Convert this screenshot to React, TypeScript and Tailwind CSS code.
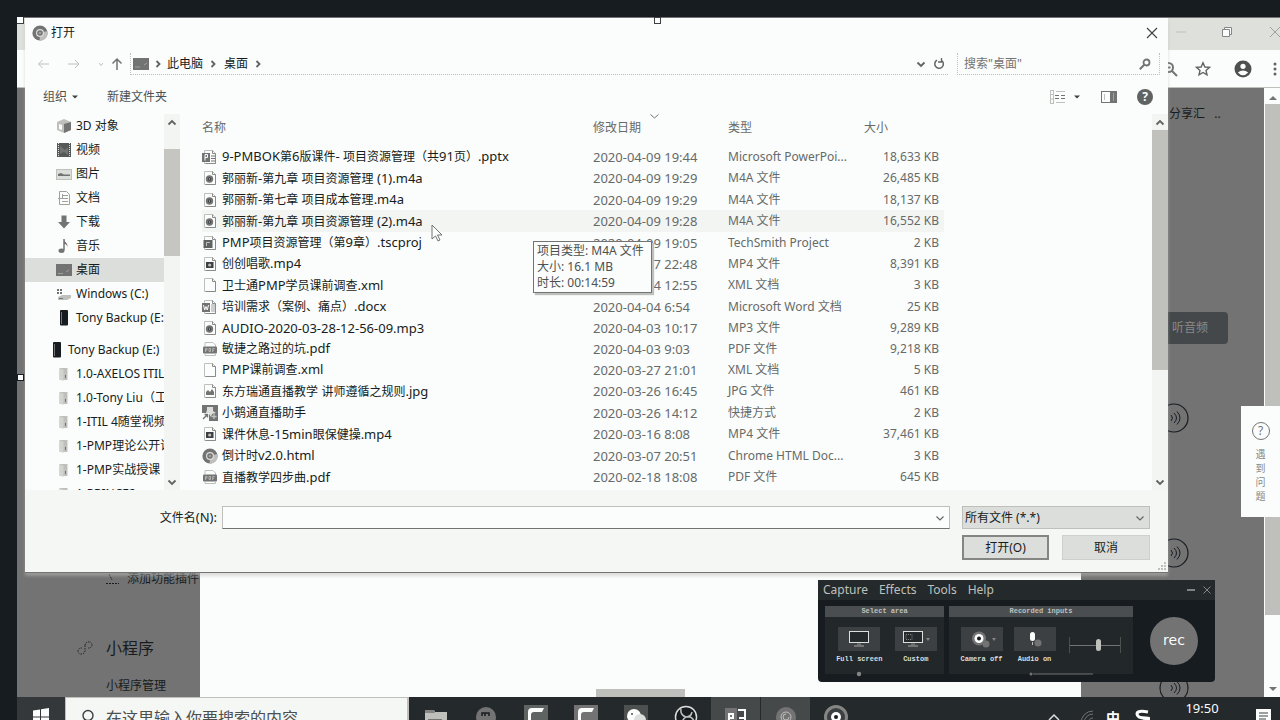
import React from "react";

type Kind = "pptx" | "audio" | "tsc" | "video" | "blank" | "docx" | "pdf" | "image" | "app" | "chrome";

const files: { kind: Kind; name: string; date: string; type: string; size: string; active?: boolean }[] = [
  { kind: "pptx", name: "9-PMBOK第6版课件- 项目资源管理（共91页）.pptx", date: "2020-04-09 19:44", type: "Microsoft PowerPoi...", size: "18,633 KB" },
  { kind: "audio", name: "郭丽新-第九章 项目资源管理 (1).m4a", date: "2020-04-09 19:29", type: "M4A 文件", size: "26,485 KB" },
  { kind: "audio", name: "郭丽新-第七章 项目成本管理.m4a", date: "2020-04-09 19:29", type: "M4A 文件", size: "18,137 KB" },
  { kind: "audio", name: "郭丽新-第九章 项目资源管理 (2).m4a", date: "2020-04-09 19:28", type: "M4A 文件", size: "16,552 KB", active: true },
  { kind: "tsc", name: "PMP项目资源管理（第9章）.tscproj", date: "2020-04-09 19:05", type: "TechSmith Project", size: "2 KB" },
  { kind: "video", name: "创创唱歌.mp4", date: "2020-04-07 22:48", type: "MP4 文件", size: "8,391 KB" },
  { kind: "blank", name: "卫士通PMP学员课前调查.xml", date: "2020-04-04 12:55", type: "XML 文档", size: "3 KB" },
  { kind: "docx", name: "培训需求（案例、痛点）.docx", date: "2020-04-04 6:54", type: "Microsoft Word 文档", size: "25 KB" },
  { kind: "audio", name: "AUDIO-2020-03-28-12-56-09.mp3", date: "2020-04-03 10:17", type: "MP3 文件", size: "9,289 KB" },
  { kind: "pdf", name: "敏捷之路过的坑.pdf", date: "2020-04-03 9:03", type: "PDF 文件", size: "9,218 KB" },
  { kind: "blank", name: "PMP课前调查.xml", date: "2020-03-27 21:01", type: "XML 文档", size: "5 KB" },
  { kind: "image", name: "东方瑞通直播教学 讲师遵循之规则.jpg", date: "2020-03-26 16:45", type: "JPG 文件", size: "461 KB" },
  { kind: "app", name: "小鹅通直播助手", date: "2020-03-26 14:12", type: "快捷方式", size: "2 KB" },
  { kind: "video", name: "课件休息-15min眼保健操.mp4", date: "2020-03-16 8:08", type: "MP4 文件", size: "37,461 KB" },
  { kind: "chrome", name: "倒计时v2.0.html", date: "2020-03-07 20:51", type: "Chrome HTML Doc...", size: "3 KB" },
  { kind: "pdf", name: "直播教学四步曲.pdf", date: "2020-02-18 18:08", type: "PDF 文件", size: "645 KB" },
];

type Place = "cube" | "film" | "picture" | "doc" | "down" | "note" | "desktop" | "drive" | "phone" | "folder";

const places: { icon: Place; name: string; selected?: boolean; root?: boolean }[] = [
  { icon: "cube", name: "3D 对象" },
  { icon: "film", name: "视频" },
  { icon: "picture", name: "图片" },
  { icon: "doc", name: "文档" },
  { icon: "down", name: "下载" },
  { icon: "note", name: "音乐" },
  { icon: "desktop", name: "桌面", selected: true },
  { icon: "drive", name: "Windows (C:)" },
  { icon: "phone", name: "Tony Backup (E:)" },
  { icon: "phone", name: "Tony Backup (E:)", root: true },
  { icon: "folder", name: "1.0-AXELOS ITIL" },
  { icon: "folder", name: "1.0-Tony Liu（工作）" },
  { icon: "folder", name: "1-ITIL 4随堂视频" },
  { icon: "folder", name: "1-PMP理论公开课" },
  { icon: "folder", name: "1-PMP实战授课" },
  { icon: "folder", name: "1-PRINCE2" },
];

/** Latin runs inherit the surrounding size; Chinese runs are set one step smaller. */
function Mixed({ children }: { children: string }) {
  return (
    <>
      {children.split(/([\u3000-\u9fff\uff00-\uffef]+)/).map((run, i) =>
        i % 2 ? <span key={i} className="text-[12px]">{run}</span> : run,
      )}
    </>
  );
}

function ChromeMark({ className }: { className: string }) {
  return (
    <svg viewBox="0 0 16 16" className={className} aria-hidden="true">
      <circle cx="8" cy="8" r="7.6" fill="#737373" />
      <path d="M8 8 15.4 6A7.6 7.6 0 0 1 7.6 15.6Z" fill="#bfc0bb" />
      <circle cx="8" cy="8" r="4" fill="#dcdedb" />
      <circle cx="8" cy="8" r="2.8" fill="#737373" />
      <circle cx="8" cy="8" r="1.3" fill="#a0a09d" />
    </svg>
  );
}

function FileIcon({ kind }: { kind: Kind }) {
  if (kind === "chrome") return <ChromeMark className="size-4 shrink-0" />;
  if (kind === "app")
    return (
      <svg viewBox="0 0 16 16" className="size-4 shrink-0" aria-hidden="true">
        <rect width="16" height="16" fill="#737373" />
        <path d="M5 2h6v4l3 2-4 1-1 3-2-3-3-1 1-3z" fill="#dcdedb" />
        <path d="M0 8h7v8H0z" fill="#fbfdfc" />
        <path d="M1 14l4-4M2.500 9.500H5.500V12.500" stroke="#737373" strokeWidth="1.400" fill="none" />
        <path d="M12 9v5M9.500 11.500h5" stroke="#bfc0bb" strokeWidth="1.300" />
      </svg>
    );
  if (kind === "pdf")
    return (
      <svg viewBox="0 0 16 16" className="size-4 shrink-0" aria-hidden="true">
        <path d="M3 5V1.500h8L13.500 4v2M3 13v1.500h10.500V13" fill="none" stroke="#bfc0bb" />
        <rect x="1" y="5.500" width="14" height="7" rx="1" fill="#737373" />
        <path d="M3.500 11V7.500h1.500v1.700H3.500M7 7.500v3h1.500v-3H7M10.700 11V7.500h2M10.700 9.200h1.500" fill="none" stroke="#bfc0bb" strokeWidth="0.800" />
      </svg>
    );
  return (
    <svg viewBox="0 0 16 16" className="size-4 shrink-0" aria-hidden="true">
      <path d="M2.500 1.500h8l3 3v10h-11z" fill="#fbfdfc" stroke="#bfc0bb" />
      <path d="M10.500 1.500v3h3v10h-10" fill="none" stroke="#8a8a88" />
      {kind === "audio" && (
        <>
          <circle cx="7.500" cy="9" r="3.700" fill="#737373" />
          <circle cx="7.500" cy="9" r="1.700" fill="#3c4042" />
          <circle cx="7.500" cy="9" r="0.700" fill="#bfc0bb" />
        </>
      )}
      {kind === "video" && (
        <>
          <rect x="4" y="6" width="7.500" height="6" fill="#3c4042" />
          <circle cx="7.700" cy="9" r="1.600" fill="#bfc0bb" />
        </>
      )}
      {kind === "tsc" && (
        <>
          <rect x="1.500" y="5" width="9" height="8" fill="#5f6362" />
          <path d="M8 7.500H4.500V11" stroke="#bfc0bb" fill="none" />
        </>
      )}
      {kind === "image" && <path d="M4 12V9l2-2 2 2 2-3 2 3v3z" fill="#737373" />}
      {kind === "pptx" && (
        <>
          <path d="M9 7h4M9 9.500h4M9 12h4" stroke="#737373" />
          <rect x="0" y="4" width="8" height="9" fill="#737373" />
          <path d="M3 11.500v-6h2.500v3H3" stroke="#fbfdfc" fill="none" />
        </>
      )}
      {kind === "docx" && (
        <>
          <path d="M9 6h4M9 8h4M9 10h4M9 12h4" stroke="#a0a09d" />
          <rect x="0" y="4" width="8" height="9" fill="#737373" />
          <path d="M1.500 6 2.700 11 4 7.500 5.300 11 6.500 6" stroke="#fbfdfc" fill="none" />
        </>
      )}
    </svg>
  );
}

function PlaceIcon({ icon }: { icon: Place }) {
  return (
    <svg viewBox="0 0 16 16" className="size-4 shrink-0" aria-hidden="true">
      {icon === "cube" && (
        <>
          <path d="M1 4 8 1l7 3v8l-7 3-7-3z" fill="#bfc0bb" />
          <path d="M8 6l7-2v8l-7 3z" fill="#737373" />
          <path d="M3 6l3 1v5l-3-1z" fill="#fbfdfc" />
        </>
      )}
      {icon === "film" && (
        <>
          <rect x="1" y="1" width="14" height="14" fill="#555958" />
          <path d="M2.500 1v14M13.500 1v14" stroke="#dcdedb" strokeDasharray="1 1" />
          <path d="M4 4l5 4 3-3v8l-4-3-4 2z" fill="#737373" />
        </>
      )}
      {icon === "picture" && (
        <>
          <rect x="0.500" y="3.500" width="15" height="10" fill="#dcdedb" stroke="#bfc0bb" />
          <path d="M2 10V8l3-1 3 1.500 6 0V10z" fill="#737373" />
        </>
      )}
      {icon === "doc" && (
        <>
          <path d="M3.500 1.500h7l3 3v10h-10z" fill="#fbfdfc" stroke="#a0a09d" />
          <path d="M2 8.500h10M6 11.500h6M6 5.500h6M6.500 4v5" stroke="#a0a09d" />
        </>
      )}
      {icon === "down" && <path d="M5.500 1.500h5V8H14l-6 6.500L2 8h3.500z" fill="#737373" />}
      {icon === "note" && (
        <>
          <path d="M8 1v11" stroke="#737373" strokeWidth="1.500" />
          <path d="M8 1c0 3 4 3.500 3.500 8C11 6.500 9 6 8 6z" fill="#737373" />
          <ellipse cx="5.500" cy="12.700" rx="3" ry="2.200" fill="#737373" />
        </>
      )}
      {icon === "desktop" && (
        <>
          <rect x="0" y="2" width="16" height="12" fill="#737373" />
          <path d="M2 11.500h5M10 10l3-2" stroke="#a0a09d" />
        </>
      )}
      {icon === "drive" && (
        <>
          <path d="M1 3h2v2H1zM4 3h2v2H4zM1 6h2v2H1zM4 6h2v2H4z" fill="#737373" />
          <path d="M2 11l4-2h9v3l-4 2H2z" fill="#bfc0bb" />
          <path d="M3 12.500h4" stroke="#737373" />
        </>
      )}
      {icon === "phone" && (
        <>
          <rect x="4" y="0" width="8" height="15.500" rx="1" fill="#171c20" />
          <path d="M5.500 2v12" stroke="#737373" />
        </>
      )}
      {icon === "folder" && (
        <>
          <path d="M3.500 2h8v12h-8z" fill="#bfc0bb" />
          <path d="M3.500 2l4 2v11l-4-1.500z" fill="#d2d4d0" />
          <path d="M9 9h1v3H9z" fill="#737373" />
        </>
      )}
    </svg>
  );
}

type Dir = "up" | "down" | "right";
const chevrons: Record<Dir, string> = { up: "M2.500 7.500 6 4l3.500 3.500", down: "M2.500 4.500 6 8l3.500-3.500", right: "M4.500 3l3 3-3 3" };

function Chevron({ dir, bold }: { dir: Dir; bold?: boolean }) {
  return (
    <svg viewBox="0 0 12 12" className="size-3 shrink-0" aria-hidden="true">
      <path d={chevrons[dir]} fill="none" stroke="#5f6362" strokeWidth={bold ? 1.8 : 1.1} />
    </svg>
  );
}

function Caret() {
  return (
    <svg viewBox="0 0 6 4" className="h-1 w-1.5 shrink-0" aria-hidden="true">
      <path d="M0 .5h6L3 3.500z" fill="#3c4042" />
    </svg>
  );
}

function NavBar() {
  return (
    <div className="flex h-[32px] items-center pt-0.5 pr-2 pl-[10px]">
      <button aria-label="后退" className="flex w-[30px] justify-start">
        <svg viewBox="0 0 14 12" className="ml-0.5 h-3 w-3.5"><path d="M12 6H1.500M5.500 2 1.500 6 5.500 10" fill="none" stroke="#bfc0bb" /></svg>
      </button>
      <button aria-label="前进" className="flex w-[30px] justify-start">
        <svg viewBox="0 0 14 12" className="ml-0.5 h-3 w-3.5"><path d="M1 6h10.500M8 2 12 6 8 10" fill="none" stroke="#bfc0bb" /></svg>
      </button>
      <button aria-label="最近位置" className="flex w-3 items-center justify-center">
        <svg viewBox="0 0 4 3" className="h-[3px] w-1"><path d="M0 0 2 2.500 4 0" fill="none" stroke="#bfc0bb" /></svg>
      </button>
      <button aria-label="上移" className="flex w-[23px] justify-center pr-1">
        <svg viewBox="0 0 12 14" className="h-3.5 w-3"><path d="M6 13V2M1.500 6.500 6 2l4.500 4.500" fill="none" stroke="#737373" strokeWidth="1.500" /></svg>
      </button>
      <div className="flex h-[22px] flex-1 items-center border-b border-l border-dotted border-[#bfc0bb] pl-0.5 text-[12px] text-[#171c20]">
        <svg viewBox="0 0 16 12" className="h-3 w-4"><path d="M0 0h16v12H0z" fill="#737373" /><path d="M2 9h5M11 7l3-2" stroke="#a0a09d" /></svg>
        <span className="ml-[3px] flex"><Chevron dir="right" bold /></span>
        <a href="#pc" className="ml-[3px] shrink-0 whitespace-nowrap">此电脑</a>
        <span className="mr-2 ml-1 flex w-[9px]"><Chevron dir="right" bold /></span>
        <a href="#desktop" className="shrink-0 whitespace-nowrap">桌面</a>
        <span className="ml-1 flex"><Chevron dir="right" bold /></span>
        <button aria-label="历史" className="ml-auto flex w-[18px] justify-center"><Chevron dir="down" bold /></button>
        <button aria-label="刷新" className="flex w-[18px] justify-center">
          <svg viewBox="0 0 12 12" className="size-3"><path d="M9 2.800A4.300 4.300 0 1 1 4 2.200" fill="none" stroke="#5f6362" strokeWidth="1.500" /><path d="M8.500 0v4H5" fill="none" stroke="#5f6362" strokeWidth="1.300" /></svg>
        </button>
      </div>
      <div className="ml-[9px] flex h-[22px] w-[203px] items-center border-x border-b border-dotted border-[#bfc0bb] pr-2 pl-1.5">
        <input aria-label="搜索" placeholder={'搜索"桌面"'} className="min-w-0 flex-1 bg-transparent text-[12px] outline-none placeholder:text-[#737373]" />
        <svg viewBox="0 0 12 12" className="size-3"><circle cx="7.500" cy="4.500" r="3" fill="none" stroke="#737373" strokeWidth="1.800" /><path d="M5.300 6.700.8 11.200" stroke="#737373" strokeWidth="2" /></svg>
      </div>
    </div>
  );
}

function Toolbar() {
  return (
    <div className="flex h-[35px] items-center pr-[15px] pl-[18px] text-[12px] text-[#4c504f]">
      <button className="flex items-center gap-[5px]">组织<Caret /></button>
      <button className="ml-[29px]">新建文件夹</button>
      <button aria-label="视图" className="ml-auto flex items-center gap-2">
        <svg viewBox="0 0 16 14" className="h-3.5 w-4"><path d="M0.500 0v14M3.500 0v14M0 .5h4M0 4.500h4M0 9h4M0 13.500h4M6 1.500h9M6 12.500h9" stroke="#bfc0bb" /><path d="M5 5.500h4M11 5.500h4M5 8.500h4M11 8.500h4" stroke="#737373" /></svg>
        <Caret />
      </button>
      <button aria-label="预览窗格" className="ml-[21px]">
        <svg viewBox="0 0 16 12" className="h-3 w-4"><rect x="0.500" y="0.500" width="15" height="11" fill="#fbfdfc" stroke="#737373" /><path d="M9 0h7v12H9z" fill="#737373" /><path d="M3.500 3v6" stroke="#bfc0bb" /><path d="M12.500 2v8" stroke="#a0a09d" /></svg>
      </button>
      <button aria-label="帮助" className="ml-5 flex size-4 items-center justify-center rounded-full bg-[#5f6362] text-[12px] font-bold text-[#fbfdfc]">?</button>
    </div>
  );
}

function FileTable() {
  return (
    <table className="h-[374px] w-[742px] table-fixed border-collapse text-left text-[13px]/[16px] whitespace-nowrap text-[#666a69]">
      <colgroup>
        <col className="w-[383px]" />
        <col className="w-[135px]" />
        <col className="w-[136px]" />
        <col className="w-[88px]" />
      </colgroup>
      <thead>
        <tr className="h-[32px] text-[12px]">
          <th className="pt-0.5 pb-1.5 font-normal">名称</th>
          <th className="relative pt-0.5 pb-1.5 pl-2 font-normal">
            修改日期
            <svg viewBox="0 0 9 5" className="absolute top-0 left-[65px] h-[5px] w-[9px]" aria-hidden="true"><path d="M.5.5l4 3.500 4-3.500" fill="none" stroke="#737373" /></svg>
          </th>
          <th className="pt-0.5 pb-1.5 pl-2 font-normal">类型</th>
          <th className="pt-0.5 pb-1.5 pl-2 font-normal">大小</th>
        </tr>
      </thead>
      <tbody>
        {files.map((f) => (
          <tr key={f.name} className={f.active ? "bg-[#f3f5f3]" : ""}>
            <td className="p-0">
              <div className="flex items-center gap-1 text-[#171c20]">
                <FileIcon kind={f.kind} />
                <span><Mixed>{f.name}</Mixed></span>
              </div>
            </td>
            <td className="p-0 pl-2">{f.date}</td>
            <td className="p-0 pl-2 text-[12px]">{f.type}</td>
            <td className="p-0 pr-[5px] text-right text-[12px]">{f.size}</td>
          </tr>
        ))}
      </tbody>
    </table>
  );
}

function OpenDialog() {
  return (
    <section role="dialog" aria-label="打开" className="absolute top-[18px] right-[112px] left-[25px] z-10 bg-[#fbfdfc] shadow-[0_1px_0_#737373,0_4px_3px_#bfc0bb80]">
      <header className="flex h-[29px] items-center pr-[10px] pl-[7px]">
        <ChromeMark className="size-4" />
        <h1 className="ml-[3px] text-[12px] text-[#171c20]">打开</h1>
        <button aria-label="关闭" className="ml-auto">
          <svg viewBox="0 0 12 12" className="size-3"><path d="M1 1l10 10M11 1 1 11" stroke="#3c4042" strokeWidth="1.100" /></svg>
        </button>
      </header>
      <NavBar />
      <Toolbar />
      <div className="flex h-[376px] overflow-hidden">
        <ul className="w-[139px] overflow-hidden text-[12px]/[24px] text-[#171c20]">
          {places.map((p, i) => (
            <li key={i} className={p.root ? "mt-2" : ""}>
              <button
                className={
                  "flex h-6 w-full items-center overflow-hidden text-left whitespace-nowrap " +
                  (p.selected ? "bg-[#dcdedb] " : "") +
                  (p.root ? "gap-[3px] pl-[24px]" : "gap-1 pl-[31px]")
                }
              >
                <PlaceIcon icon={p.icon} />
                <span>{p.name}</span>
              </button>
            </li>
          ))}
        </ul>
        <div className="flex w-4 flex-col items-center bg-[#f3f5f3] pt-[3px] pb-0.5">
          <Chevron dir="up" bold />
          <div className="mt-5 h-[107px] w-full bg-[#c5c6c2]" />
          <span className="mt-auto flex"><Chevron dir="down" bold /></span>
        </div>
        <div className="min-w-0 flex-1 pl-[22px]">
          <FileTable />
        </div>
        <div className="flex w-4 flex-col items-center bg-[#f3f5f3] pt-[3px] pb-0.5">
          <Chevron dir="up" bold />
          <div className="mt-px h-60 w-full bg-[#c0c1bc]" />
          <span className="mt-auto flex"><Chevron dir="down" bold /></span>
        </div>
      </div>
      <form className="flex h-[82px] flex-col gap-[6px] bg-[#f5f7f5] pt-4 pr-[18px] text-[12px] text-[#171c20]" onSubmit={(e) => e.preventDefault()}>
        <div className="flex h-[23px] items-center">
          <label htmlFor="filename" className="w-[192px] text-right text-[13px]"><Mixed>文件名(N):</Mixed></label>
          <div className="ml-[5px] flex h-full flex-1 items-center border border-[#bfc0bb] border-b-[#737373] bg-[#fbfdfc] pr-[3px]">
            <input id="filename" className="min-w-0 flex-1 bg-transparent px-1 outline-none" />
            <Chevron dir="down" />
          </div>
          <div className="relative ml-[12px] flex h-full w-[188px] items-center border border-[#bfc0bb] bg-[#dcdedb]">
            <select aria-label="文件类型" className="h-full w-full appearance-none bg-transparent pl-0.5 text-[12px] outline-none">
              <option>所有文件 (*.*)</option>
            </select>
            <span className="pointer-events-none absolute right-[3px] flex"><Chevron dir="down" /></span>
          </div>
        </div>
        <div className="flex justify-end gap-[13px]">
          <button className="h-[25px] w-[87px] border-2 border-[#858684] bg-[#dcdedb] text-[12px]">打开(O)</button>
          <button className="h-[25px] w-[88px] border border-[#cfd0cd] bg-[#dcdedb]">取消</button>
        </div>
      </form>
      <svg viewBox="0 0 8 8" className="absolute right-0.5 bottom-0.5 size-2" aria-hidden="true"><path d="M6 0h2v2H6zM3 3h2v2H3zM6 3h2v2H6zM0 6h2v2H0zM3 6h2v2H3zM6 6h2v2H6z" fill="#bfc0bb" /></svg>
      <div role="tooltip" className="absolute top-[223px] left-[508px] w-[119px] border border-[#737373] bg-[#fbfdfc] px-[3px] pt-px pb-px text-[12px]/[16px] whitespace-nowrap text-[#4c504f] shadow-[2px_2px_1px_#bfc0bb]">
        <p>项目类型: M4A 文件</p>
        <p>大小: 16.1 MB</p>
        <p>时长: 00:14:59</p>
      </div>
      <svg viewBox="0 0 12 18" className="absolute top-[206px] left-[406px] h-[18px] w-3" aria-hidden="true">
        <path d="M1 1v14l3.500-3 2.500 5 2-1-2.500-5H11z" fill="#fbfdfc" stroke="#737373" />
      </svg>
    </section>
  );
}

function AudioBadge() {
  return (
    <svg viewBox="0 0 30 30" className="size-[30px] shrink-0" aria-hidden="true">
      <circle cx="15" cy="15" r="14" fill="none" stroke="#171c20" strokeWidth="1.200" />
      <path d="M12 12q3 3 0 6M15 10q5 5 0 10M18 8.500q6 6.500 0 13" fill="none" stroke="#171c20" />
    </svg>
  );
}

function Browser() {
  return (
    <div className="flex min-h-0 flex-1 flex-col border-t border-[#737373] bg-[#fbfdfc]">
      <div className="flex h-[32px] shrink-0 items-center justify-end gap-[36px] overflow-hidden bg-[#dee0dc] pb-1">
        <svg viewBox="0 0 10 10" className="size-2.5"><path d="M0 5h10" stroke="#bfc0bb" /></svg>
        <svg viewBox="0 0 10 10" className="mr-0.5 size-2.5"><path d="M.5 2.500h7v7h-7zM2.500 2V.5h7v7H8" fill="#fbfdfc" stroke="#858684" /></svg>
        <svg viewBox="0 0 10 10" className="size-2.5"><path d="M0 0l10 10M10 0 0 10" stroke="#a0a09d" /></svg>
      </div>
      <div className="flex h-[38px] shrink-0 items-center justify-end border-b border-[#bfc0bb]">
        <svg viewBox="0 0 16 16" className="size-4"><circle cx="6.500" cy="6.500" r="4.500" fill="none" stroke="#737373" strokeWidth="2" /><path d="M10 10l5 5M4.500 6.500h4" stroke="#737373" strokeWidth="2" /></svg>
        <svg viewBox="0 0 16 16" className="ml-[17px] size-4"><path d="M8 1.800l1.900 4.200 4.500.4-3.400 3 1 4.500L8 11.500l-4 2.400 1-4.500-3.400-3 4.500-.4z" fill="none" stroke="#5f6362" strokeWidth="1.400" /></svg>
        <svg viewBox="0 0 18 18" className="ml-[23px] size-[18px]"><circle cx="9" cy="9" r="8.500" fill="#4c504f" /><circle cx="9" cy="6.300" r="2.600" fill="#fbfdfc" /><path d="M3.800 12.500q5.200-4 10.400 0Q9 18 3.800 12.500" fill="#fbfdfc" /></svg>
        <svg viewBox="0 0 4 14" className="mr-[3px] ml-[21px] h-3.5 w-1"><circle cx="2" cy="2" r="1.500" fill="#5f6362" /><circle cx="2" cy="7" r="1.500" fill="#5f6362" /><circle cx="2" cy="12" r="1.500" fill="#5f6362" /></svg>
      </div>
      <div className="flex min-h-0 flex-1 overflow-hidden">
        <nav className="flex w-[183px] flex-col justify-end overflow-hidden bg-[#737373] text-[12px]/[16px] whitespace-nowrap text-[#171c20]">
          <a href="#plugins" className="flex items-center gap-2 pl-[89px]">
            <svg viewBox="0 0 13 12" className="h-3 w-[13px] shrink-0"><path d="M3 1l3 6M0 10.500h13" stroke="#171c20" strokeDasharray="2 1" /></svg>
            添加功能插件
          </a>
          <a href="#mini" className="mt-[51px] flex items-center gap-[13px] pl-[60px] text-[16px]/[20px]">
            <svg viewBox="0 0 16 16" className="size-4 shrink-0"><path d="M8 5.500C8 1 15 .5 15 5q0 3-4 3M8 10.500C8 15 1 15.500 1 11q0-3 4-3M8 5.500v5" fill="none" stroke="#24292c" strokeDasharray="1.500 1" /></svg>
            小程序
          </a>
          <a href="#manage" className="mt-5 mb-[3px] pl-[89px]">小程序管理</a>
        </nav>
        <main className="flex flex-1 flex-col items-center justify-end bg-[#fbfdfc]">
          <div className="h-2 w-[89px] bg-[#bfc0bb]" />
        </main>
        <aside className="flex w-[183px] flex-col items-start bg-[#737373] pl-[78px] text-[12px] text-[#171c20]">
          <p className="mt-[18px] shrink-0 pl-[10px] text-[12px]/[16px] whitespace-nowrap">分享汇 &nbsp; ..</p>
          <button className="mt-[190px] h-[32px] w-[69px] shrink-0 rounded-sm bg-[#44484a] pr-5 text-right text-[#8a8a88]">听音频</button>
          <div className="mt-[59px] flex flex-col gap-[105px]">
            <AudioBadge />
            <AudioBadge />
            <AudioBadge />
          </div>
        </aside>
        <div className="flex w-4 flex-col items-center border-l border-[#fbfdfc] bg-[#fbfdfc] py-1.5">
          <svg viewBox="0 0 8 4" className="mt-0.5 h-1 w-2 shrink-0"><path d="M0 4 4 0l4 4z" fill="#737373" /></svg>
          <div className="mt-1 h-[511px] w-full bg-[#bfc0bb]" />
          <svg viewBox="0 0 8 4" className="mt-auto h-1 w-2 shrink-0"><path d="M0 0h8L4 4z" fill="#737373" /></svg>
        </div>
      </div>
    </div>
  );
}

function HelpTab() {
  return (
    <aside className="absolute top-[406px] right-0 flex w-[39px] flex-col items-center bg-[#fbfdfc] pt-4 pb-[14px] text-[#8a8a88]">
      <span className="flex size-[18px] items-center justify-center rounded-full border border-[#737373] text-[12px] text-[#737373]">?</span>
      <span className="mt-[7px] w-[10px] text-center text-[10px]/[14px] break-all">遇到问题</span>
    </aside>
  );
}

function Device({ label, icon, drop }: { label: string; icon: "screen" | "custom" | "camera" | "mic"; drop?: boolean }) {
  return (
    <button className="flex flex-1 flex-col items-center gap-1">
      <span className="flex h-6 w-[42px] items-center justify-center bg-[#3c4042]">
        <svg viewBox="0 0 22 18" className="h-[18px] w-[22px]" aria-hidden="true">
          {(icon === "screen" || icon === "custom") && (
            <>
              <rect x="1.500" y="1.500" width="19" height="11" fill="#24292c" stroke="#dcdedb" />
              <path d="M9 13.500h4v1.500h3v2H6v-2h3z" fill="#737373" />
              {icon === "custom" && <path d="M4 4.500h6v5H4z" fill="none" stroke="#858684" strokeDasharray="1 1" />}
            </>
          )}
          {icon === "camera" && (
            <>
              <circle cx="11" cy="8.500" r="7" fill="#737373" />
              <circle cx="11" cy="8.500" r="4.500" fill="#fbfdfc" />
              <circle cx="11" cy="8.500" r="2" fill="#171c20" />
              <circle cx="18" cy="14" r="3.500" fill="#737373" />
            </>
          )}
          {icon === "mic" && (
            <>
              <rect x="6" y="2" width="5" height="9" rx="2.500" fill="#fbfdfc" />
              <path d="M8.500 12v3" stroke="#bfc0bb" />
              <circle cx="14" cy="13" r="3.500" fill="#737373" />
            </>
          )}
        </svg>
        {drop && <svg viewBox="0 0 4 3" className="ml-0.5 h-[3px] w-1"><path d="M0 0h4L2 3z" fill="#858684" /></svg>}
      </span>
      <span className="font-['Liberation_Mono',monospace] text-[7px]/[8px] font-bold whitespace-nowrap text-[#dcdedb]">{label}</span>
    </button>
  );
}

function Group({ title, className, children }: { title: string; className: string; children: React.ReactNode }) {
  return (
    <div className={"flex h-[68px] flex-col bg-[#22272a] " + className}>
      <h2 className="h-[11px] bg-[#4a4e50] text-center font-['Liberation_Mono',monospace] text-[7px]/[11px] font-bold text-[#bfc0bb]">{title}</h2>
      <div className="mt-2.5 flex items-start pl-1.5">{children}</div>
    </div>
  );
}

function Recorder() {
  return (
    <section aria-label="Recorder" className="absolute top-[580px] right-[65px] z-20 w-[397px] rounded-sm bg-[#171c20] pb-2">
      <div className="flex h-5 items-center gap-[11px] bg-[#24292c] pr-1 pl-[5px] text-[12px] text-[#bfc0bb]">
        <button>Capture</button>
        <button>Effects</button>
        <button>Tools</button>
        <button>Help</button>
        <div className="ml-auto flex gap-2">
          <button aria-label="Minimize"><svg viewBox="0 0 8 8" className="size-2"><path d="M0 4h8" stroke="#dcdedb" /></svg></button>
          <button aria-label="Close"><svg viewBox="0 0 8 8" className="size-2"><path d="M.5.5l7 7M7.500.5l-7 7" stroke="#858684" /></svg></button>
        </div>
      </div>
      <div className="flex pt-1.5 pl-[7px]">
        <Group title="Select area" className="w-[119px]">
          <Device label="Full screen" icon="screen" />
          <Device label="Custom" icon="custom" drop />
        </Group>
        <Group title="Recorded inputs" className="ml-[5px] w-[184px]">
          <Device label="Camera off" icon="camera" drop />
          <Device label="Audio on" icon="mic" />
          <label className="mt-2.5 mr-3 ml-2 flex h-4 w-[52px] items-center border-x border-[#4c504f]">
            <input type="range" aria-label="Volume" defaultValue={58} className="h-px w-full appearance-none bg-[#737373] [&::-webkit-slider-thumb]:h-3 [&::-webkit-slider-thumb]:w-[5px] [&::-webkit-slider-thumb]:appearance-none [&::-webkit-slider-thumb]:rounded-sm [&::-webkit-slider-thumb]:bg-[#bfc0bb]" />
          </label>
        </Group>
        <button className="mt-[11px] ml-[17px] size-12 rounded-full bg-[#737373] pb-0.5 font-['DejaVu_Sans',sans-serif] text-[14px] text-[#fbfdfc]">rec</button>
      </div>
      <svg viewBox="0 0 300 6" className="absolute bottom-[5px] left-[38px] h-1.5 w-[300px]" aria-hidden="true">
        <circle cx="3" cy="3" r="2.200" fill="#858684" />
        <circle cx="175" cy="3" r="1.500" fill="#737373" />
        <path d="M177 3h60" stroke="#737373" />
      </svg>
    </section>
  );
}

type Task = "explorer" | "duck" | "camtasia" | "camtasia2" | "wechat" | "obs" | "ppt" | "chrome" | "recorder";
const tasks: Task[] = ["explorer", "duck", "camtasia", "camtasia2", "wechat", "obs", "ppt", "chrome", "recorder"];

function TaskIcon({ task }: { task: Task }) {
  return (
    <svg viewBox="0 0 24 24" className="size-6" aria-hidden="true">
      {task === "explorer" && <><path d="M1 5h9l1 2h12v15H1z" fill="#bfc0bb" /><path d="M1 5h9l1 3H1z" fill="#858684" /><path d="M4 14h14v8H4z" fill="#737373" /></>}
      {task === "duck" && <><circle cx="12" cy="12" r="10" fill="#737373" /><path d="M8 11V8h7v3M11 8v3" fill="none" stroke="#171c20" strokeWidth="1.500" /></>}
      {(task === "camtasia" || task === "camtasia2") && <><rect width="24" height="24" fill={task === "camtasia" ? "#5f6362" : "#737373"} /><path d="M20 3H8q-4 0-4 4v14h3V10q0-3 3-3h8z" fill="#fbfdfc" /></>}
      {task === "wechat" && <><rect width="24" height="24" fill="#4c504f" /><circle cx="10" cy="11" r="7" fill="#fbfdfc" /><circle cx="16" cy="15" r="6" fill="#dcdedb" /><circle cx="8" cy="9" r="1" fill="#4c504f" /></>}
      {task === "obs" && <><circle cx="12" cy="12" r="10.500" fill="#171c20" stroke="#dcdedb" strokeWidth="1.500" /><path d="M7 4q-1 6 5 8 5 0 6-5M12 12q-5 3-3 8M12 12q6-1 8 4" fill="none" stroke="#bfc0bb" strokeWidth="1.500" /></>}
      {task === "ppt" && <><rect x="1" y="3" width="12" height="19" fill="#737373" /><path d="M5 18V9h4v4H5" fill="none" stroke="#fbfdfc" strokeWidth="2" /><path d="M14 5h7v17h-7M15 13h5" fill="none" stroke="#fbfdfc" strokeWidth="2" /></>}
      {task === "chrome" && <><circle cx="12" cy="12" r="10" fill="#737373" /><circle cx="12" cy="12" r="5" fill="none" stroke="#bfc0bb" /><path d="M12 9a3 3 0 1 0 3 3" fill="none" stroke="#bfc0bb" /></>}
      {task === "recorder" && <><circle cx="12" cy="12" r="10.500" fill="#3c4042" stroke="#858684" strokeWidth="3" /><circle cx="12" cy="12" r="5" fill="#fbfdfc" /><circle cx="12" cy="12" r="2" fill="#171c20" /></>}
    </svg>
  );
}

function Taskbar() {
  return (
    <footer className="relative z-10 h-[23px] shrink-0 overflow-hidden bg-[#24292c]">
      <div className="flex h-10 items-stretch">
        <button aria-label="开始" className="flex w-[48px] items-center justify-center bg-[#34383a]">
          <svg viewBox="0 0 18 18" className="size-[18px]"><path d="M1 2.500 8 1.500V8.500H1zM9 1.300 17 0v8.500H9zM1 9.500h7v7l-7-1zM9 9.500h8V18l-8-1.300z" fill="#fbfdfc" /></svg>
        </button>
        <label className="flex w-[344px] items-center gap-3 border-t border-r-2 border-l border-[#bfc0bb] bg-[#f5f7f5] pl-[14px]">
          <svg viewBox="0 0 14 18" className="h-[18px] w-3.5"><circle cx="8" cy="6.500" r="5" fill="none" stroke="#3c4042" strokeWidth="1.400" /><path d="M5 10.500 1 16" stroke="#3c4042" strokeWidth="1.600" /></svg>
          <input aria-label="搜索" placeholder="在这里输入你要搜索的内容" className="min-w-0 flex-1 bg-transparent text-[16px] outline-none placeholder:text-[#4c504f]" />
        </label>
        <div className="ml-0.5 flex">
          {tasks.map((t) => (
            <button key={t} aria-label={t} className={"flex w-[50px] items-center justify-center " + (t === "ppt" || t === "chrome" ? "border-r border-[#24292c] bg-[#454949]" : "")}>
              <TaskIcon task={t} />
            </button>
          ))}
        </div>
        <div className="ml-auto flex items-center pr-[7px] text-[#fbfdfc]">
          <svg viewBox="0 0 12 8" className="h-2 w-3"><path d="M1 7l5-5 5 5" fill="none" stroke="#dcdedb" strokeWidth="1.500" /></svg>
          <svg viewBox="0 0 14 14" className="ml-5 size-3.5"><path d="M1 13A12 12 0 0 1 13 1M4 13a9 9 0 0 1 9-9M8 13a5 5 0 0 1 5-5" fill="none" stroke="#737373" /></svg>
          <span className="ml-3 text-[14px] font-bold">中</span>
          <svg viewBox="0 0 16 16" className="ml-[14px] size-4"><path d="M14 3Q3 1 3 5t9 4-9 5" fill="none" stroke="#fbfdfc" strokeWidth="3" /></svg>
          <time className="ml-[22px] flex h-full w-[60px] justify-center pt-0.5 text-[13px]/[18px]">19:50</time>
          <svg viewBox="0 0 18 18" className="ml-[23px] size-[18px]"><path d="M1 1h15v13H7l-3 3v-3H1z" fill="#fbfdfc" /><path d="M4 5h9M4 8h9M4 11h7" stroke="#3c4042" /></svg>
        </div>
      </div>
    </footer>
  );
}

export default function App() {
  return (
    <div className="relative flex h-screen flex-col overflow-hidden bg-[#171c20] pt-[17px] pl-[17px] font-['Noto_Sans','Noto_Sans_CJK_SC',sans-serif]">
      <Browser />
      <Taskbar />
      <OpenDialog />
      <HelpTab />
      <Recorder />
      <span className="absolute top-[17px] left-[654px] z-20 size-[7px] border border-[#3c4042] bg-[#fbfdfc]" />
      <span className="absolute top-[374px] left-[17px] z-20 size-[7px] border border-[#171c20] bg-[#fbfdfc]" />
      <span className="absolute top-[17px] left-[17px] z-20 size-[7px] border-r border-b border-[#3c4042] bg-[#fbfdfc]" />
    </div>
  );
}
